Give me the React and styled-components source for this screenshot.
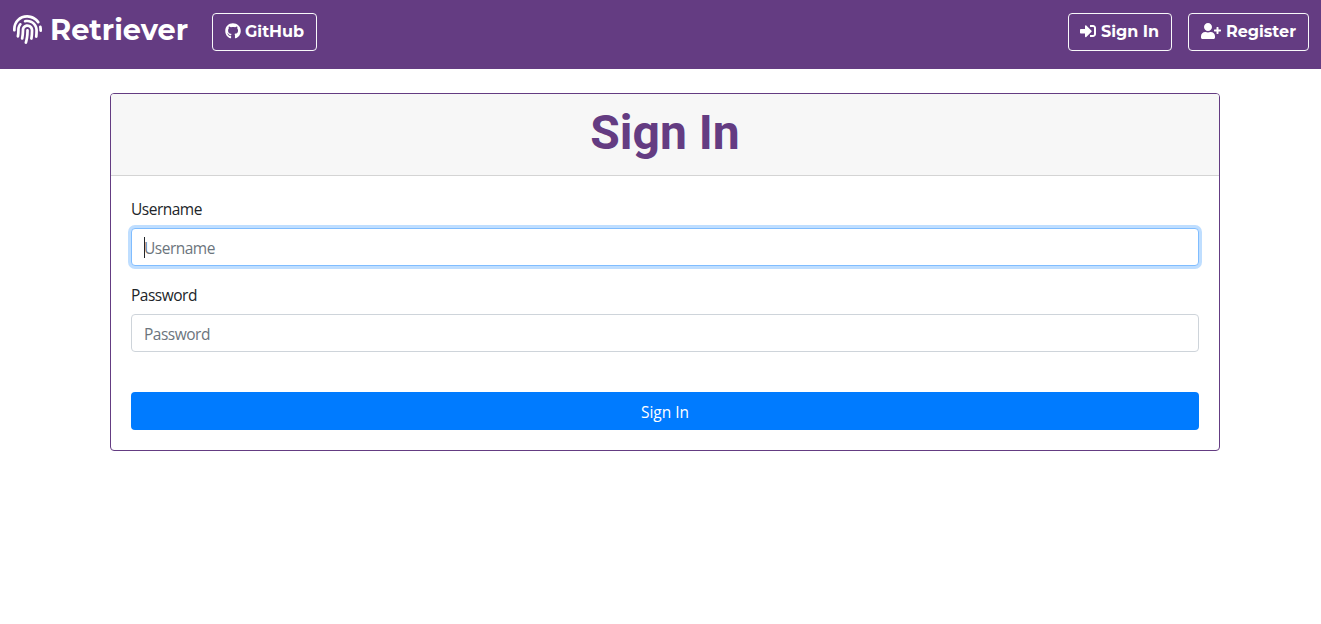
import React from "react";
import styled, { createGlobalStyle } from "styled-components";
import { FaFingerprint, FaGithub, FaSignInAlt, FaUserPlus } from "react-icons/fa";

const GlobalStyle = createGlobalStyle`
  *, *::before, *::after { box-sizing: border-box; }
  body {
    margin: 0;
    background: #fff;
    color: #212529;
    font-family: "Segoe UI", "Open Sans", "Noto Sans", sans-serif;
    font-size: 16px;
    line-height: 24px;
  }
`;

const Navbar = styled.nav`
  display: flex;
  align-items: flex-start;
  height: 69px;
  padding: 13px 12px 0;
  background: #643c82;
  font-family: Montserrat, Inter, sans-serif;
  font-weight: 700;
  color: #fff;
`;

const Brand = styled.a`
  display: flex;
  align-items: center;
  width: 176px;
  height: 34px;
  margin-right: 24px;
  font-size: 28.8px;
  white-space: nowrap;

  svg {
    flex: none;
    margin: -2px 8px 0 1px;
  }
`;

const NavButton = styled.a`
  display: flex;
  align-items: center;
  width: ${(p) => p.$width}px;
  height: 38px;
  padding: 0 0 0 12px;
  border: 1px solid #f8f9fa;
  border-radius: 4px;
  font-size: 16px;
  white-space: nowrap;

  svg {
    flex: none;
    margin: ${(p) => p.$iconMargin || "-2px 4px 0 0"};
  }
`;

const NavActions = styled.div`
  display: flex;
  gap: 16px;
  margin-left: auto;
`;

const Card = styled.main`
  width: 1110px;
  height: 358px;
  margin: 24px 0 0 110px;
  border: 1px solid #643c82;
  border-radius: 4px;
  overflow: hidden;
`;

const CardHeader = styled.header`
  height: 82px;
  padding-top: 10px;
  background: #f7f7f7;
  border-bottom: 1px solid #d4d4d4;
  text-align: center;
`;

const Title = styled.h1`
  margin: 0;
  color: #643c82;
  font: 700 48px/58px Roboto, sans-serif;
`;

const Form = styled.form`
  padding: 20px;
`;

const Field = styled.div`
  margin-bottom: ${(p) => p.$gap}px;
`;

const Label = styled.label`
  display: block;
  padding-top: 1px;
  margin-bottom: 7px;
  font-size: 15.5px;
  letter-spacing: -0.5px;
`;

const InputFrame = styled.div`
  position: relative;
`;

const Input = styled.input`
  display: block;
  width: 100%;
  height: 38px;
  padding: 2px 12px 0;
  border: 1px solid ${(p) => (p.$active ? "#80bdff" : "#ced4da")};
  border-radius: 4px;
  outline: none;
  box-shadow: ${(p) => (p.$active ? "0 0 0 3px #bfdeff" : "none")};
  font: inherit;
  font-size: 15.5px;
  letter-spacing: -0.5px;

  &::placeholder {
    color: #6c757d;
    opacity: 1;
  }
`;

const Caret = styled.span`
  position: absolute;
  left: 13px;
  top: 9px;
  width: 1px;
  height: 21px;
  background: #212529;
`;

const Submit = styled.button`
  display: block;
  width: 100%;
  height: 38px;
  padding: 1px 0 0;
  border: 0;
  border-radius: 4px;
  background: #007bff;
  color: #fff;
  font: inherit;
  font-size: 15.5px;
`;

export default function App() {
  return (
    <>
      <GlobalStyle />
      <Navbar>
        <Brand>
          <FaFingerprint size={29} />
          <span>Retriever</span>
        </Brand>
        <NavButton $width={105}>
          <FaGithub size={16} />
          <span>GitHub</span>
        </NavButton>
        <NavActions>
          <NavButton $width={104} $iconMargin="-2px 5px 0 -1px">
            <FaSignInAlt size={16} />
            <span>Sign In</span>
          </NavButton>
          <NavButton $width={121} $iconMargin="-2px 5px 0 0">
            <FaUserPlus size={20} />
            <span>Register</span>
          </NavButton>
        </NavActions>
      </Navbar>
      <Card>
        <CardHeader>
          <Title>Sign In</Title>
        </CardHeader>
        <Form>
          <Field $gap={16}>
            <Label htmlFor="username">Username</Label>
            <InputFrame>
              <Input id="username" placeholder="Username" $active />
              <Caret />
            </InputFrame>
          </Field>
          <Field $gap={40}>
            <Label htmlFor="password">Password</Label>
            <Input id="password" type="password" placeholder="Password" />
          </Field>
          <Submit type="button">Sign In</Submit>
        </Form>
      </Card>
    </>
  );
}
